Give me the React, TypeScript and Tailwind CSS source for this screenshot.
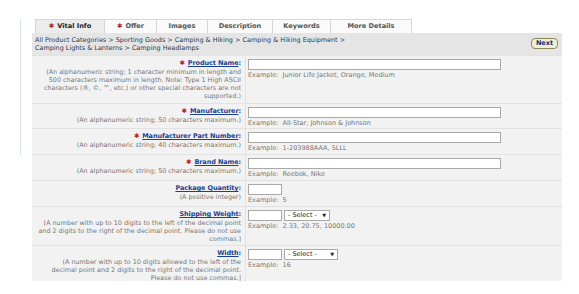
import React from "react";

const Star = () => <span className="text-[#b01c1c] mr-[3px]">✱</span>;

const tabs = [
  { name: "Vital Info", w: "w-[70px]", req: true, active: true },
  { name: "Offer", w: "w-[53px]", req: true },
  { name: "Images", w: "w-[52px]" },
  { name: "Description", w: "w-[66px]" },
  { name: "Keywords", w: "w-[59px]" },
  { name: "More Details", w: "w-[82px]" },
];

function Select({ w }: { w: string }) {
  return (
    <div className={`${w} h-[11px] bg-white border border-[#a9a9a9] flex items-center justify-between px-[3px] text-[6.5px] text-[#222]`}>
      <span>- Select -</span>
      <span className="text-[5px]">▼</span>
    </div>
  );
}

function Row({
  label,
  req,
  desc,
  example,
  input,
  h,
}: {
  label: string;
  req?: boolean;
  desc: string[];
  example: string;
  input: React.ReactNode;
  h: string;
}) {
  return (
    <div className={`grid grid-cols-[214px_1fr] border-t border-[#e2e2e2] ${h}`}>
      <div className="border-r border-[#e2e2e2] pr-[4px] pt-[3px] text-right">
        <div className="leading-[9px] text-[6.5px] font-bold tracking-[-0.1px]">
          {req && <Star />}
          <span className="text-[#1d3f8f] underline">{label}</span>
          <span className="text-[#1d3f8f]">:</span>
        </div>
        <div className="text-[6.4px] leading-[8px] text-[#777] whitespace-nowrap">
          {desc.map((d, i) => (
            <div key={i}>{d}</div>
          ))}
        </div>
      </div>
      <div className="pl-[2px] pt-[3px]">
        {input}
        <div className="text-[6.5px] leading-[8px] text-[#777] mt-[1px] whitespace-pre">Example:  {example}</div>
      </div>
    </div>
  );
}

const Big = () => <div className="w-[253px] h-[11px] bg-white border border-[#a9a9a9]" />;
const Small = () => <div className="w-[34px] h-[11px] bg-white border border-[#a9a9a9]" />;

export default function App() {
  return (
    <div className="w-[579px] h-[294px] bg-white overflow-hidden flex items-start pt-[19px] font-['DejaVu_Sans',sans-serif]">
      <div className="w-[21px] h-[136px] border-r border-[#dde3ee] shrink-0" />
      <div className="ml-[11px] w-[530px]">
        <div className="flex pl-[3px] h-[14px]">
          {tabs.map((t) => (
            <div
              key={t.name}
              className={`${t.w} border border-b-0 border-[#d6d6d6] -ml-px first:ml-0 flex items-center justify-center text-[6.6px] font-bold ${
                t.active ? "bg-[#ececec] text-[#222]" : "bg-[#fafafa] text-[#555]"
              }`}
            >
              {t.req && <Star />}
              {t.name}
            </div>
          ))}
        </div>
        <div className="bg-[#e5e5e5] h-[22px] flex items-start justify-between pl-[3px] pr-[4px] pt-[3px]">
          <div className="text-[6.45px] leading-[8px] text-[#2c3b52]">
            <div>All Product Categories &gt; Sporting Goods &gt; Camping &amp; Hiking &gt; Camping &amp; Hiking Equipment &gt;</div>
            <div>Camping Lights &amp; Lanterns &gt; Camping Headlamps</div>
          </div>
          <button className="mt-[2px] h-[11px] w-[27px] rounded-[4px] border border-[#8c8a5a] bg-[#efefd8] text-[6.5px] font-bold text-[#1d2a6b] leading-none">
            Next
          </button>
        </div>
        <div className="bg-[#f2f2f2]">
          <Row
            h="h-[48px]"
            req
            label="Product Name"
            desc={[
              "(An alphanumeric string; 1 character minimum in length and",
              "500 characters maximum in length. Note: Type 1 High ASCII",
              "characters (®, ©, ™, etc.) or other special characters are not",
              "supported.)",
            ]}
            example="Junior Life Jacket, Orange, Medium"
            input={<Big />}
          />
          <Row
            h="h-[25px]"
            req
            label="Manufacturer"
            desc={["(An alphanumeric string; 50 characters maximum.)"]}
            example="All-Star, Johnson & Johnson"
            input={<Big />}
          />
          <Row
            h="h-[26px]"
            req
            label="Manufacturer Part Number"
            desc={["(An alphanumeric string; 40 characters maximum.)"]}
            example="1-203988AAA, 5LLL"
            input={<Big />}
          />
          <Row
            h="h-[26px]"
            req
            label="Brand Name"
            desc={["(An alphanumeric string; 50 characters maximum.)"]}
            example="Reebok, Nike"
            input={<Big />}
          />
          <Row
            h="h-[26px]"
            label="Package Quantity"
            desc={["(A positive integer)"]}
            example="5"
            input={<Small />}
          />
          <Row
            h="h-[39px]"
            label="Shipping Weight"
            desc={[
              "[A number with up to 10 digits to the left of the decimal point",
              "and 2 digits to the right of the decimal point. Please do not use",
              "commas.]",
            ]}
            example="2.33, 20.75, 10000.00"
            input={
              <div className="flex gap-[2px]">
                <Small />
                <Select w="w-[46px]" />
              </div>
            }
          />
          <Row
            h="h-[36px]"
            label="Width"
            desc={[
              "(A number with up to 10 digits allowed to the left of the",
              "decimal point and 2 digits to the right of the decimal point.",
              "Please do not use commas.]",
            ]}
            example="16"
            input={
              <div className="flex gap-[2px]">
                <Small />
                <Select w="w-[54px]" />
              </div>
            }
          />
        </div>
      </div>
    </div>
  );
}
